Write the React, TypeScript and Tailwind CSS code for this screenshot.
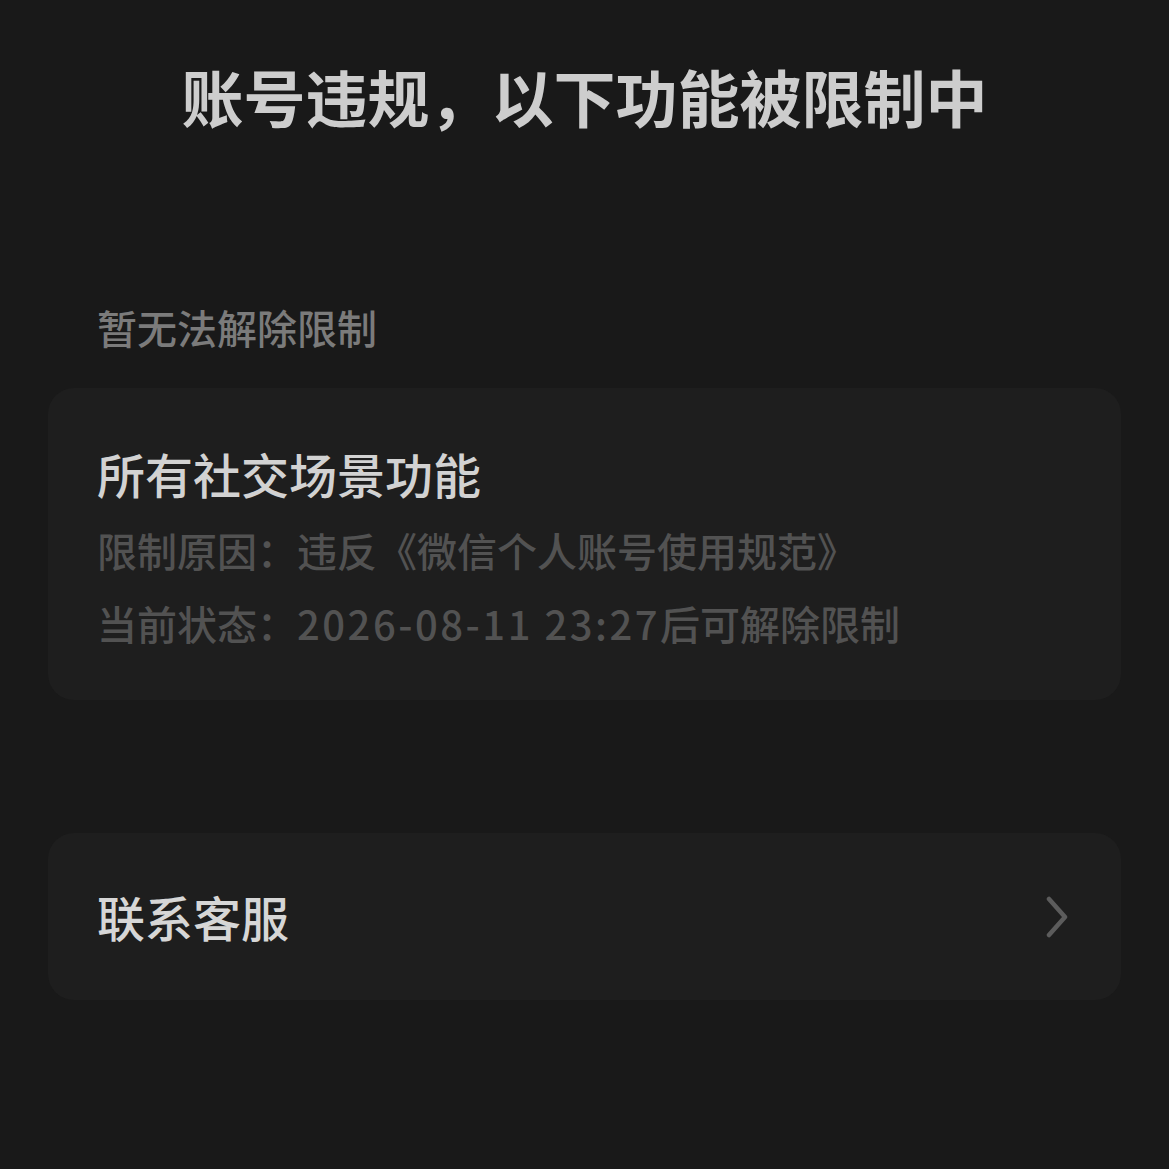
import React from "react";

export default function App() {
  return (
    <div
      className="w-full min-h-[1169px] bg-[#191919] px-[48px]"
      style={{ fontFamily: '"Noto Sans CJK SC", "Noto Sans", sans-serif' }}
    >
      <div className="pt-[53px] text-center text-[62px] leading-[87px] font-bold text-[#cdcdcd]">
        账号违规，以下功能被限制中
      </div>
      <div className="mt-[160px] pl-[49px] text-[40px] leading-[54px] font-medium text-[#7b7b7b]">
        暂无法解除限制
      </div>
      <div className="mt-[34px] rounded-[26px] bg-[#1e1e1e] pl-[49px] pr-[40px] pt-[52px] pb-[40px]">
        <div className="text-[48px] leading-[67px] font-medium text-[#d2d2d2]">
          所有社交场景功能
        </div>
        <div className="mt-[7px] text-[40px] leading-[73px] font-medium text-[#525252] whitespace-nowrap">
          <div>限制原因：违反《微信个人账号使用规范》</div>
          <div>
            当前状态：<span className="tracking-[2.5px]">2026-08-11 23:27</span>后可解除限制
          </div>
        </div>
      </div>
      <div className="mt-[133px] h-[167px] rounded-[26px] bg-[#1e1e1e] pl-[49px] pr-[50px] flex items-center justify-between">
        <div className="text-[48px] leading-[67px] font-medium text-[#d6d6d6]">联系客服</div>
        <svg width="28" height="42" viewBox="0 0 28 42" fill="none">
          <path d="M6 3 L22 21 L6 39" stroke="#5c5c5c" strokeWidth="4.5" strokeLinecap="round" strokeLinejoin="round" />
        </svg>
      </div>
    </div>
  );
}
